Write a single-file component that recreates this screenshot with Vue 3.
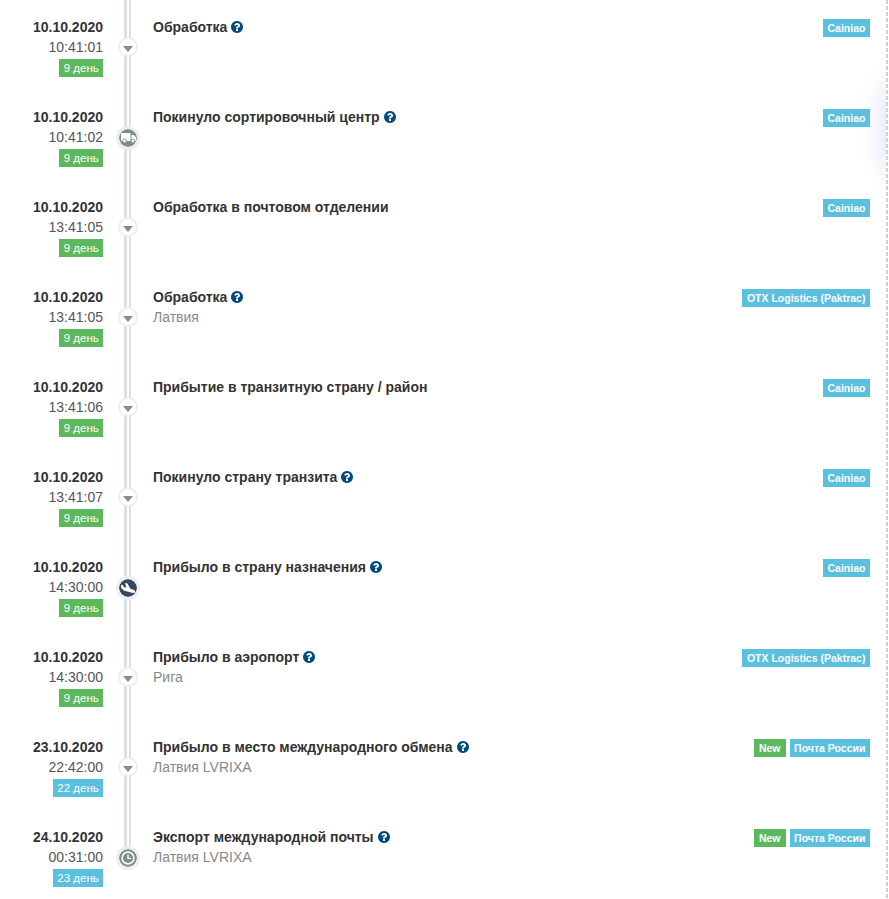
<script setup>
const CN = 'Cainiao'
const OTX = 'OTX Logistics (Paktrac)'
const RU = 'Почта России'
const rows = [
  { date: '10.10.2020', time: '10:41:01', day: '9 день', title: 'Обработка', help: true, tag: CN, icon: 'caret' },
  { date: '10.10.2020', time: '10:41:02', day: '9 день', title: 'Покинуло сортировочный центр', help: true, tag: CN, icon: 'truck' },
  { date: '10.10.2020', time: '13:41:05', day: '9 день', title: 'Обработка в почтовом отделении', help: false, tag: CN, icon: 'caret' },
  { date: '10.10.2020', time: '13:41:05', day: '9 день', title: 'Обработка', help: true, sub: 'Латвия', tag: OTX, icon: 'caret' },
  { date: '10.10.2020', time: '13:41:06', day: '9 день', title: 'Прибытие в транзитную страну / район', help: false, tag: CN, icon: 'caret' },
  { date: '10.10.2020', time: '13:41:07', day: '9 день', title: 'Покинуло страну транзита', help: true, tag: CN, icon: 'caret' },
  { date: '10.10.2020', time: '14:30:00', day: '9 день', title: 'Прибыло в страну назначения', help: true, tag: CN, icon: 'plane' },
  { date: '10.10.2020', time: '14:30:00', day: '9 день', title: 'Прибыло в аэропорт', help: true, sub: 'Рига', tag: OTX, icon: 'caret' },
  { date: '23.10.2020', time: '22:42:00', day: '22 день', info: true, title: 'Прибыло в место международного обмена', help: true, sub: 'Латвия LVRIXA', tag: RU, isNew: true, icon: 'caret' },
  { date: '24.10.2020', time: '00:31:00', day: '23 день', info: true, title: 'Экспорт международной почты', help: true, sub: 'Латвия LVRIXA', tag: RU, isNew: true, icon: 'clock', last: true },
]
const helpPath = 'M1024 1376v-192q0-14-9-23t-23-9H800q-14 0-23 9t-9 23v192q0 14 9 23t23 9h192q14 0 23-9t9-23zm256-672q0-88-55.5-163T1086 425t-170-41q-243 0-371 213-15 24 8 42l132 100q7 6 19 6 16 0 25-12 53-68 86-92 34-24 86-24 48 0 85.5 26t37.5 59q0 38-20 61t-68 45q-63 28-115.5 86.5T768 1020v36q0 14 9 23t23 9h192q14 0 23-9t9-23q0-19 21.5-49.5T1100 960q32-18 49-28.5t46-35 44.5-48 28-60.5 12.5-81zm384 192q0 209-103 385.5T1281.5 1561 896 1664t-385.5-103T231 1281.5 128 896t103-385.5T510.5 231 896 128t385.5 103T1561 510.5 1664 896z'
const planePath = 'M44.81 205.66l88.74 80a62.607 62.607 0 0 0 25.47 13.93l287.6 78.35c26.48 7.21 54.56 8.72 81 1.36 29.67-8.27 43.44-21.21 47.25-35.71 3.83-14.5-1.73-32.71-23.37-54.96-19.28-19.82-44.35-32.79-70.83-40l-97.51-26.56L282.8 30.22c-1.51-5.81-5.95-10.35-11.66-11.91L206.05.58c-10.56-2.88-20.9 5.32-20.71 16.44l47.92 164.21-102.2-27.84-27.59-67.88c-1.93-4.89-6.01-8.57-11.02-9.93L52.72 64.75c-10.34-2.82-20.53 5-20.72 15.88l.23 101.78c.19 8.91 6.03 17.34 12.58 23.25z'
</script>

<template>
  <div class="page">
    <div class="glow"></div>
    <div class="edge"></div>
    <div v-for="(r, i) in rows" :key="i" class="row">
      <div class="when">
        <div class="date">{{ r.date }}</div>
        <div class="time">{{ r.time }}</div>
        <span class="label day" :class="r.info ? 'info' : 'ok'">{{ r.day }}</span>
      </div>
      <div class="axis" :class="{ last: r.last }">
        <div class="dot" :class="r.icon">
          <svg v-if="r.icon === 'caret'" class="caret-mark" width="10" height="6" viewBox="0 0 10 6"><path d="M0 0h10L5 6z" fill="#8a8a86"/></svg>
          <svg v-else-if="r.icon === 'truck'" width="15" height="10" viewBox="0 0 15 10">
            <path d="M0 0h9.5v8H0zM10.5 2h2.4L15 4.4V8h-4.5z" fill="#fff"/>
            <circle cx="3.5" cy="8" r="1.9" fill="#fff" stroke="#7f8c8d" stroke-width="0.9"/>
            <circle cx="12" cy="8" r="1.9" fill="#fff" stroke="#7f8c8d" stroke-width="0.9"/>
          </svg>
          <svg v-else-if="r.icon === 'plane'" width="15" height="10" viewBox="30 0 570 385"><path :d="planePath" fill="#fff"/></svg>
          <svg v-else width="14" height="14" viewBox="0 0 14 14">
            <circle cx="7" cy="7" r="5.9" fill="none" stroke="#fff" stroke-width="1.6"/>
            <path d="M7 3.4v4h3" fill="none" stroke="#fff" stroke-width="1.3"/>
          </svg>
        </div>
      </div>
      <div class="body">
        <div class="title">
          <span>{{ r.title }}</span>
          <svg v-if="r.help" class="help" width="14" height="14" viewBox="0 0 1792 1792"><path :d="helpPath" fill="#004a7f"/></svg>
        </div>
        <div v-if="r.sub" class="sub">{{ r.sub }}</div>
      </div>
      <div class="tags">
        <span v-if="r.isNew" class="label ok tag new">New</span>
        <span class="label info tag">{{ r.tag }}</span>
      </div>
    </div>
  </div>
</template>

<style scoped>
.page {
  position: relative;
  box-sizing: border-box;
  width: 888px;
  height: 899px;
  overflow: hidden;
  font-family: "Liberation Sans", Arial, sans-serif;
  font-size: 14px;
  line-height: 20px;
  color: #333;
  background: #fff;
}
.glow {
  position: absolute;
  right: -14px;
  top: 78px;
  width: 26px;
  height: 100px;
  border-radius: 50%;
  background: #ebebfb;
  filter: blur(9px);
}
.edge {
  position: absolute;
  right: 0;
  top: 0;
  bottom: 0;
  width: 2px;
  background: repeating-linear-gradient(to bottom, #cfcfd6 0 4px, #fff 4px 6px);
}
.row {
  position: relative;
  display: grid;
  grid-template-columns: 103px 50px 1fr auto;
  height: 90px;
  padding-right: 18px;
}
.when {
  padding-top: 17px;
  text-align: right;
}
.date { font-weight: 700; }
.time { color: #555; }
.label {
  display: inline-block;
  height: 18px;
  line-height: 18px;
  color: #fff;
  vertical-align: top;
}
.day {
  margin-top: 2px;
  padding: 0 4.25px;
  font-size: 11.5px;
}
.ok { background: #5cb85c; }
.info { background: #5bc0de; }
.axis {
  position: relative;
  width: 50px;
}
.axis::before {
  content: "";
  position: absolute;
  left: 21px;
  top: 0;
  bottom: 0;
  width: 7px;
  box-sizing: border-box;
  border-left: 3px solid #dcdfe3;
  border-right: 2px solid #dcdfe3;
}
.axis.last::before { bottom: 45px; }
.dot {
  position: absolute;
  left: 25px;
  top: 47px;
  transform: translate(-50%, -50%);
  display: flex;
  align-items: center;
  justify-content: center;
  box-sizing: border-box;
  border-radius: 50%;
}
.caret {
  width: 20px;
  height: 20px;
  background: #fff;
  border: 2px solid #eee;
}
.caret-mark { margin-top: 3px; }
.truck, .clock, .plane {
  top: 48px;
  width: 24px;
  height: 24px;
  background-clip: padding-box;
  border: 3px solid #eee;
}
.truck, .clock { background-color: #7f8c8d; }
.plane { background-color: #34495e; }
.body { padding-top: 17px; }
.title {
  display: flex;
  align-items: center;
  gap: 3px;
  font-weight: 700;
}
.help { flex: none; }
.sub { color: #888; }
.tags {
  display: flex;
  gap: 4px;
  justify-content: flex-end;
  align-items: flex-start;
  padding-top: 19px;
}
.tag {
  padding: 0 4.6px;
  font-size: 10.5px;
  font-weight: 700;
}
.new { padding: 0 5px; }
</style>

<style>
html, body { margin: 0; overflow: hidden; background: #fff; }
</style>
